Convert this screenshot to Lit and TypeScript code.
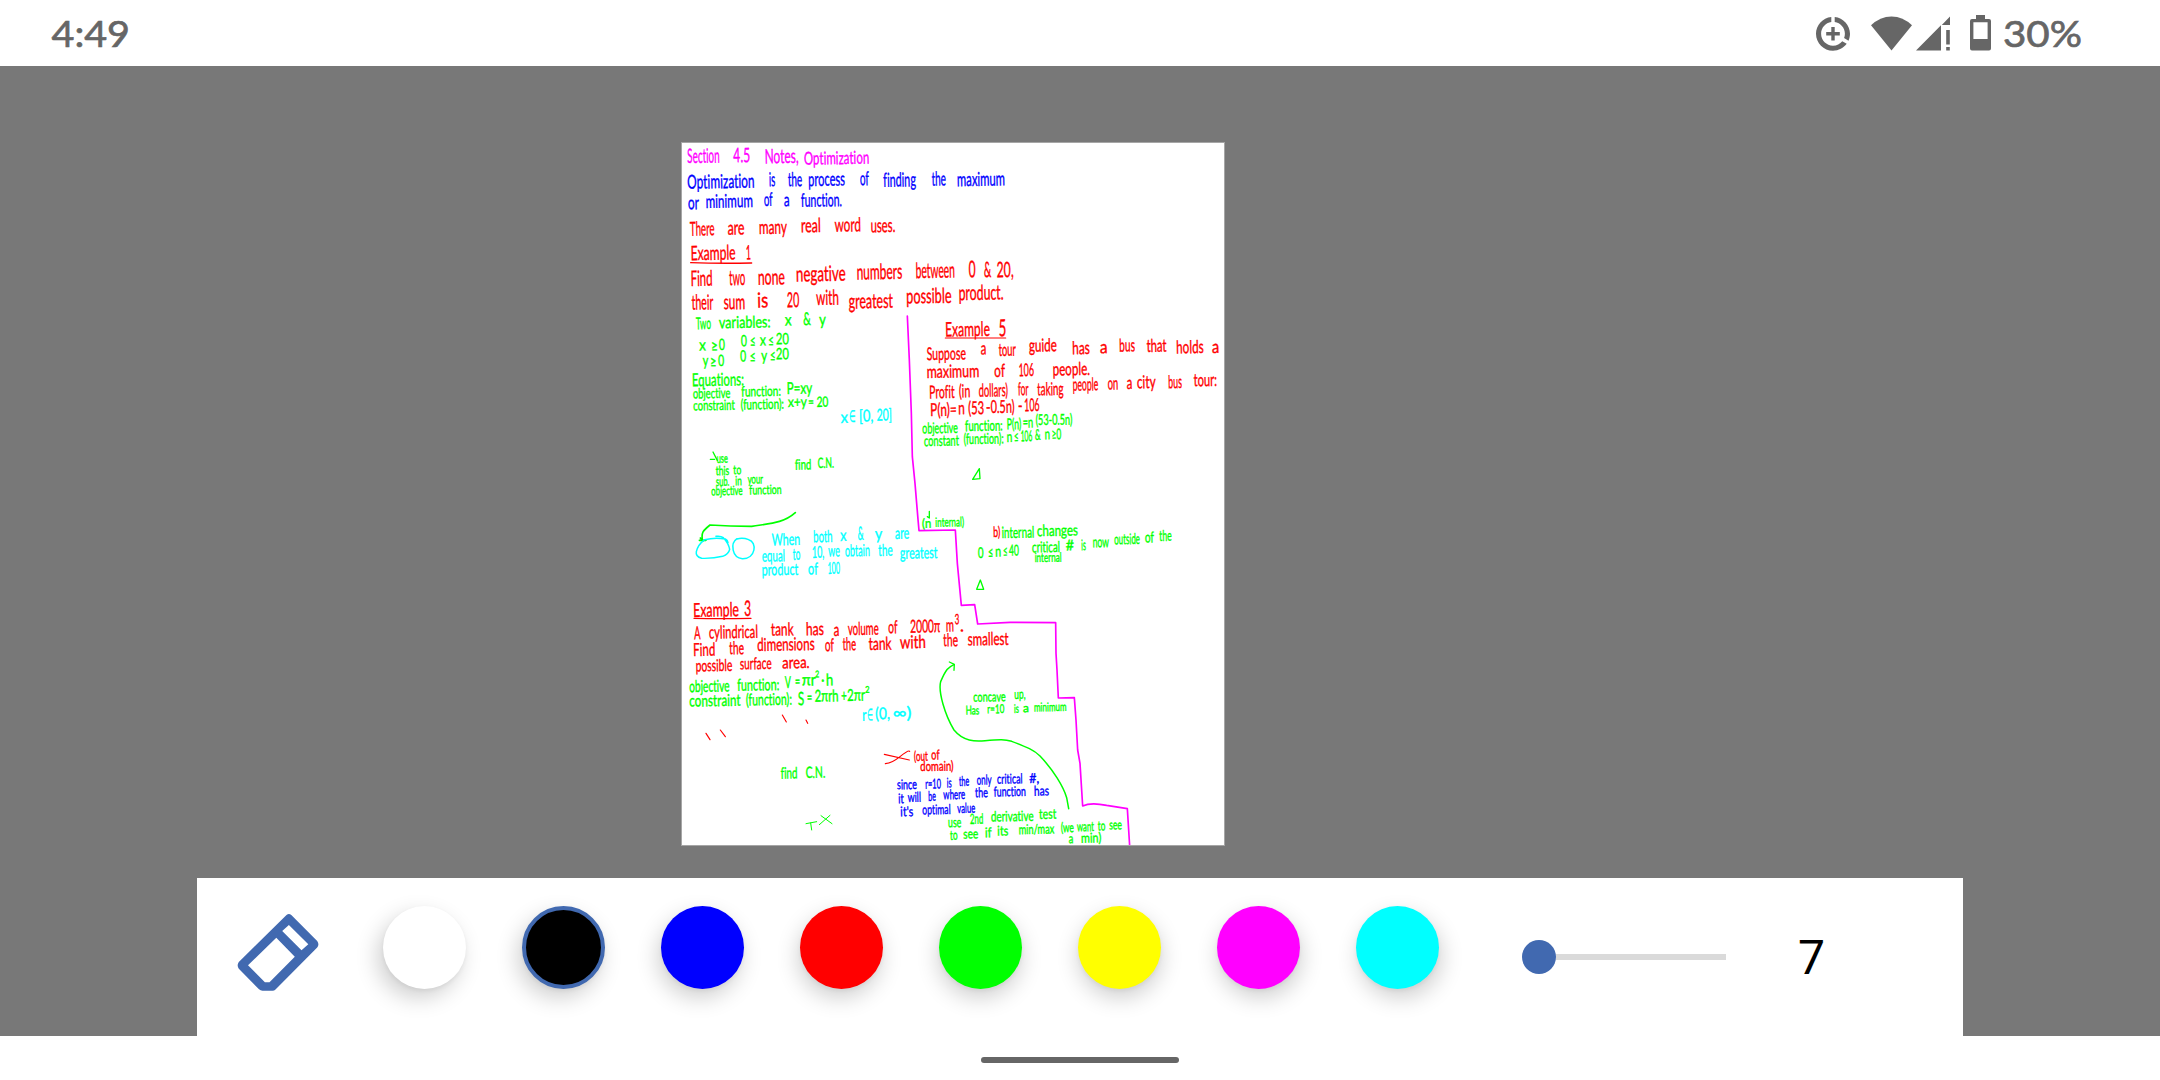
import { LitElement, html, svg, css } from "lit";
import { customElement, property } from "lit/decorators.js";

const MAGENTA = "#ff00ff";
const BLUE = "#0000ff";
const RED = "#ff0000";
const GREEN = "#00ff00";
const CYAN = "#00ffff";

// A word: text, left edge, right edge, baseline, optional size override.
type Word = [string, number, number, number, number?];
interface Line { ink: string; size: number; words: Word[]; }
interface Block { dx: number; dy: number; lines: Line[]; }

// Canvas units are a third of a screen pixel.
const BLOCKS: Block[] = [
  { dx: 0, dy: 0, lines: [
    { ink: MAGENTA, size: 56, words: [["Section", 52, 149, 97], ["4.5", 190, 241, 95], ["Notes,", 284, 386, 98], ["Optimization", 402, 598, 101, 50]] },
    { ink: BLUE, size: 54, words: [["Optimization", 52, 254, 173], ["is", 297, 316, 167], ["the", 354, 397, 167], ["process", 415, 525, 166], ["of", 570, 597, 164], ["finding", 640, 738, 168], ["the", 785, 828, 165], ["maximum", 861, 1005, 166]] },
    { ink: BLUE, size: 52, words: [["or", 54, 87, 236], ["minimum", 107, 249, 231], ["of", 282, 308, 226], ["a", 342, 359, 227], ["function.", 393, 516, 228]] },
    { ink: RED, size: 54, words: [["There", 60, 134, 315], ["are", 173, 224, 312], ["many", 267, 351, 310], ["real", 393, 453, 305], ["word", 494, 573, 303], ["uses.", 602, 676, 305]] },
    { ink: RED, size: 56, words: [["Example", 62, 197, 388], ["1", 228, 243, 387]] },
    { ink: RED, size: 60, words: [["Find", 62, 128, 466], ["two", 178, 226, 464], ["none", 264, 345, 462], ["negative", 378, 527, 452], ["numbers", 560, 697, 446], ["between", 737, 855, 442], ["0", 896, 917, 441, 66], ["&", 942, 964, 440], ["20,", 980, 1031, 440]] },
    { ink: RED, size: 58, words: [["their", 65, 130, 537], ["sum", 161, 226, 536], ["is", 262, 295, 531], ["20", 351, 388, 530], ["with", 439, 507, 523], ["greatest", 536, 669, 533], ["possible", 709, 845, 518], ["product.", 866, 1001, 508]] },
  ] },
  { dx: 0, dy: 510, lines: [
    { ink: GREEN, size: 46, words: [["Two", 78, 123, 86], ["variables:", 147, 302, 82], ["x", 345, 365, 75], ["&", 400, 423, 74, 50], ["y", 448, 468, 74]] },
    { ink: GREEN, size: 44, words: [["x", 88, 108, 150], ["≥", 124, 144, 152], ["0", 147, 165, 148], ["0", 213, 231, 137], ["≤", 240, 257, 138], ["x", 270, 288, 135], ["≤", 295, 312, 136], ["20", 318, 357, 131]] },
    { ink: GREEN, size: 44, words: [["y", 98, 115, 196], ["≥", 121, 140, 199], ["0", 145, 163, 196], ["0", 211, 229, 183], ["≤", 239, 257, 184], ["y", 274, 292, 181], ["≤", 300, 317, 181], ["20", 318, 357, 176]] },
    { ink: GREEN, size: 50, words: [["Equations:", 66, 222, 256]] },
    { ink: GREEN, size: 40, words: [["objective", 69, 181, 293], ["function:", 214, 333, 287], ["P=xy", 350, 427, 280, 46], ["constraint", 70, 195, 329], ["(function):", 212, 342, 326], ["x+y", 354, 411, 319], ["=", 415, 432, 319], ["20", 440, 475, 319]] },
    { ink: CYAN, size: 46, words: [["x", 512, 534, 367], ["∈", 538, 557, 364], ["[0,", 567, 610, 363], ["20]", 620, 666, 360]] },
    { ink: GREEN, size: 36, words: [["use", 140, 174, 487], ["this", 137, 178, 524], ["to", 190, 214, 521], ["sub.", 138, 178, 556], ["in", 196, 216, 554], ["your", 233, 279, 549], ["objective", 124, 218, 584], ["function", 238, 335, 581], ["find", 375, 424, 507, 40], ["C.N.", 443, 492, 502, 40]] },
  ] },
  { dx: 660, dy: 510, lines: [
    { ink: RED, size: 56, words: [["Example", 166, 300, 107], ["5", 326, 349, 107, 66]] },
    { ink: RED, size: 50, words: [["Suppose", 110, 228, 178], ["a", 272, 289, 162], ["tour", 326, 378, 166], ["guide", 417, 501, 153], ["has", 547, 600, 161], ["a", 630, 653, 158], ["bus", 688, 735, 153], ["that", 770, 830, 154], ["holds", 859, 941, 158], ["a", 966, 988, 157]] },
    { ink: RED, size: 50, words: [["maximum", 110, 268, 231], ["of", 313, 345, 229], ["106", 386, 432, 227], ["people.", 488, 600, 224]] },
    { ink: RED, size: 50, words: [["Profit", 118, 194, 293], ["(in", 207, 241, 290], ["dollars)", 266, 354, 288], ["for", 384, 416, 284], ["taking", 442, 521, 284], ["people", 548, 625, 270], ["on", 653, 685, 267], ["a", 710, 727, 265], ["city", 741, 797, 263], ["bus", 835, 876, 263], ["tour:", 911, 981, 257]] },
    { ink: RED, size: 50, words: [["P(n)=", 121, 200, 346], ["n", 205, 225, 341], ["(53", 235, 283, 341], ["-", 288, 302, 338], ["0.5n)", 302, 374, 337], ["-", 384, 398, 334], ["106", 403, 449, 332]] },
    { ink: GREEN, size: 42, words: [["objective", 97, 204, 398], ["function:", 225, 338, 391], ["P(n)", 350, 394, 386], ["=n", 398, 430, 381], ["(53-0.5n)", 437, 547, 373], ["constant", 102, 207, 436], ["(function):", 221, 341, 430], ["n", 350, 367, 424], ["≤", 372, 386, 424], ["106", 392, 427, 422], ["&", 435, 452, 418], ["n", 464, 480, 416], ["≥0", 485, 514, 416]] },
  ] },
  { dx: 0, dy: 1110, lines: [
    { ink: CYAN, size: 46, words: [["When", 305, 391, 134], ["both", 430, 488, 125], ["x", 511, 530, 121], ["&", 563, 581, 118, 52], ["y", 615, 637, 117], ["are", 675, 718, 115]] },
    { ink: CYAN, size: 46, words: [["equal", 276, 345, 183], ["to", 368, 391, 178], ["10,", 426, 463, 172], ["we", 475, 510, 168], ["obtain", 525, 600, 167], ["the", 625, 668, 166], ["greatest", 690, 803, 174]] },
    { ink: CYAN, size: 46, words: [["product", 275, 385, 224], ["of", 414, 444, 222], ["100", 473, 510, 220]] },
    { ink: RED, size: 54, words: [["Example", 70, 207, 348], ["3", 223, 244, 346, 60]] },
    { ink: RED, size: 50, words: [["A", 73, 92, 416], ["cylindrical", 117, 264, 413], ["tank", 303, 371, 405], ["has", 408, 462, 404], ["a", 491, 508, 406], ["volume", 534, 626, 403], ["of", 655, 683, 398], ["2000π", 721, 811, 396], ["m", 828, 852, 393], ["3", 854, 868, 371, 40], [".", 870, 882, 393]] },
    { ink: RED, size: 50, words: [["Find", 70, 136, 466], ["the", 178, 222, 461], ["dimensions", 262, 434, 450], ["of", 465, 492, 452], ["the", 518, 558, 449], ["tank", 596, 665, 448], ["with", 690, 768, 443], ["the", 820, 864, 437], ["smallest", 893, 1016, 434]] },
  ] },
  { dx: 690, dy: 1110, lines: [
    { ink: GREEN, size: 36, words: [["(n", 66, 94, 82], ["internal)", 106, 192, 78]] },
    { ink: RED, size: 40, words: [["b)", 280, 301, 109]] },
    { ink: GREEN, size: 44, words: [["internal", 305, 403, 112], ["changes", 411, 534, 106]] },
    { ink: GREEN, size: 42, words: [["0", 234, 251, 172], ["≤", 264, 280, 171], ["n", 286, 304, 168], ["≤", 309, 323, 167], ["40", 327, 357, 165], ["critical", 396, 480, 155], ["#", 497, 522, 150], ["is", 544, 558, 149], ["now", 578, 627, 140], ["outside", 643, 720, 131], ["of", 735, 762, 126], ["the", 778, 815, 121], ["internal", 404, 485, 184, 36]] },
  ] },
  { dx: 0, dy: 1560, lines: [
    { ink: RED, size: 46, words: [["possible", 77, 187, 62], ["surface", 210, 305, 56], ["area.", 337, 419, 53]] },
    { ink: GREEN, size: 46, words: [["objective", 58, 179, 124], ["function:", 202, 328, 120], ["V", 345, 363, 112], ["=", 375, 391, 110], ["πr", 396, 438, 105], ["2", 436, 448, 80, 26], ["·", 454, 464, 105], ["h", 468, 490, 105]] },
    { ink: GREEN, size: 46, words: [["constraint", 58, 212, 167], ["(function):", 228, 366, 164], ["S", 384, 403, 164, 52], ["=", 411, 427, 158], ["2πrh", 434, 506, 153], ["+", 514, 531, 152], ["2πr", 532, 585, 151], ["2", 586, 599, 127, 26]] },
    { ink: CYAN, size: 46, words: [["r", 577, 590, 211], ["∈", 592, 609, 210], ["(0,", 616, 660, 206], ["∞)", 668, 725, 204]] },
    { ink: RED, size: 38, words: [["(out", 732, 774, 331], ["of", 784, 809, 327], ["domain)", 751, 851, 361]] },
    { ink: GREEN, size: 44, words: [["find", 332, 383, 384], ["C.N.", 407, 466, 382]] },
    { ink: BLUE, size: 38, words: [["since", 681, 741, 416], ["r=10", 766, 813, 414], ["is", 830, 845, 411], ["the", 867, 898, 406], ["only", 920, 965, 402], ["critical", 981, 1058, 399], ["#,", 1078, 1108, 397]] },
    { ink: BLUE, size: 38, words: [["it", 685, 702, 458], ["will", 713, 753, 454], ["be", 775, 798, 451], ["where", 820, 886, 446], ["the", 915, 954, 440], ["function", 971, 1068, 437], ["has", 1092, 1137, 435]] },
    { ink: BLUE, size: 38, words: [["it's", 691, 730, 497], ["optimal", 757, 842, 491], ["value", 862, 916, 487]] },
  ] },
  { dx: 750, dy: 1560, lines: [
    { ink: GREEN, size: 38, words: [["concave", 160, 257, 153], ["up,", 283, 317, 145], ["Has", 137, 178, 192, 34], ["r=10", 202, 253, 188, 34], ["is", 282, 297, 187, 34], ["a", 309, 327, 185, 34], ["minimum", 342, 440, 182, 34]] },
    { ink: GREEN, size: 40, words: [["use", 84, 124, 530], ["2nd", 150, 190, 520], ["derivative", 213, 341, 512], ["test", 357, 409, 505]] },
    { ink: GREEN, size: 38, words: [["to", 90, 113, 568], ["see", 130, 175, 564], ["if", 195, 215, 560], ["its", 232, 265, 555], ["min/max", 296, 403, 550], ["(we", 423, 462, 545], ["want", 471, 522, 542], ["to", 533, 556, 540], ["see", 568, 606, 537], ["a", 446, 460, 578], ["min)", 483, 544, 576]] },
  ] },
];

// Freehand strokes: ink, path data, stroke width.
const STROKES: [string, string, number][] = [
  [RED, "M62 398 Q150 401 245 399", 4],
  [RED, "M826 624 H1007", 3.5],
  [RED, "M72 1465 Q150 1467 243 1465", 4],
  [MAGENTA, "M712 558 L718 690 L724 850 L727 980 L735 1060 L744 1168 L747 1202 L856 1200 L862 1300 L874 1426 L914 1424 L923 1482 L1020 1477 L1157 1478 L1158 1570 L1161 1620 L1165 1704 L1213 1703 L1218 1770 L1223 1860 L1230 1900 L1238 2028 Q1262 2016 1310 2026 L1372 2036 L1379 2148", 5],
  [GREEN, "M121 988 L134 988 M129 966 L142 991", 4],
  [GREEN, "M376 1148 C340 1180 300 1180 245 1189 Q180 1189 120 1185 C98 1203 94 1207 97 1230 M88 1231 L108 1231 M91 1224 L99 1233", 5],
  [CYAN, "M138 1219 Q152 1217 160 1223 Q176 1240 179 1258 Q176 1272 158 1279 Q130 1286 95 1285 Q76 1280 79 1265 Q84 1244 104 1229 Q135 1221 166 1227 Q173 1231 174 1238", 4.5],
  [CYAN, "M201 1226 C180 1240 186 1283 217 1286 C258 1287 262 1236 236 1229 Q218 1222 201 1227", 4.5],
  [GREEN, "M908 1048 L928 1016 L930 1046 Z", 4],
  [GREEN, "M778 1144 L778 1164 L772 1160", 4],
  [GREEN, "M920 1378 L931 1350 L941 1378 Z", 4],
  [RED, "M108 1810 L120 1829 M151 1800 L166 1820 M337 1755 L349 1776 M408 1770 L413 1780", 3.5],
  [RED, "M643 1873 L718 1890 M646 1901 Q665 1900 690 1880 T719 1864", 3.5],
  [GREEN, "M408 2081 L440 2075 M422 2079 L425 2100 M448 2084 L480 2056 M453 2057 L486 2081", 3],
  [GREEN, "M852 1604 C834 1612 828 1618 812 1655 C804 1685 825 1755 852 1800 C880 1834 915 1835 945 1832 C990 1828 1005 1828 1025 1834 C1072 1852 1092 1860 1110 1878 C1150 1920 1180 1970 1190 2003 L1196 2036", 4.5],
  [GREEN, "M838 1596 L853 1603 L852 1621", 4],
];

@customElement("note-page")
export class NotePage extends LitElement {
  static styles = css`
    :host { display: block; width: 542px; height: 702px; background: #fff; outline: 1px solid #a6a6a6; }
    svg { display: block; width: 542px; height: 702px; }
    text { font-family: Lato, "DejaVu Sans", sans-serif; text-rendering: geometricPrecision; font-variant-ligatures: none; }
  `;

  private word(w: Word, line: Line) {
    const [text, left, right, base, size] = w;
    return svg`<text x=${left} y=${base + 1.5} transform="rotate(-1 ${(left + right) / 2} ${base})" font-size=${(size ?? line.size) * 1.07} textLength=${right - left} lengthAdjust="spacingAndGlyphs">${text}</text>`;
  }

  render() {
    return html`<svg viewBox="36 39 1626 2106">
      ${BLOCKS.map((b) => svg`<g transform="translate(${b.dx} ${b.dy})">
        ${b.lines.map((l) => svg`<g fill=${l.ink} stroke=${l.ink} stroke-width="1.2">${l.words.map((w) => this.word(w, l))}</g>`)}
      </g>`)}
      ${STROKES.map(([ink, d, width]) => svg`<path d=${d} fill="none" stroke=${ink} stroke-width=${width} stroke-linejoin="round" stroke-linecap="round"></path>`)}
    </svg>`;
  }
}

@customElement("status-bar")
export class StatusBar extends LitElement {
  static styles = css`
    :host { display: flex; height: 66px; box-sizing: border-box; padding: 0 76px 0 50px; justify-content: space-between; background: #fff; color: #666; }
    svg { display: block; fill: #666; }
    .label { font-size: 37.5px; }
    .label text { font-family: Lato, sans-serif; font-weight: 400; stroke: #666; stroke-width: 0.7px; }
    .right { display: flex; }
    .icons { overflow: visible; }
  `;

  render() {
    return html`
      <svg class="label" width="90" height="66"><text x="1.5" y="47" textLength="78.5" lengthAdjust="spacingAndGlyphs">4:49</text></svg>
      <div class="right">
        <svg class="icons" width="174" height="66" viewBox="1820 0 174 66">
          <path transform="translate(1812.6 13.4) scale(1.7)" d="M11 8v3H8v2h3v3h2v-3h3v-2h-3V8h-2zm2-5.95v3.03c3.39.49 6 3.39 6 6.92 0 .9-.18 1.75-.48 2.54l2.6 1.53c.56-1.24.88-2.62.88-4.07 0-5.18-3.95-9.45-9-9.95zM12 19c-3.87 0-7-3.13-7-7 0-3.53 2.61-6.43 6-6.92V2.05c-5.06.5-9 4.76-9 9.95 0 5.52 4.47 10 9.99 10 3.31 0 6.24-1.61 8.06-4.09l-2.6-1.53C16.17 17.98 14.21 19 12 19z"></path>
          <path d="M1871 25.3 Q1880 16.4 1891.5 16.4 Q1903 16.4 1912 25.3 L1891.5 50.5 Z"></path>
          <path d="M1916 50.6 L1941 25.3 V50.6 Z M1941.8 25 L1950 16.5 V25 Z M1946.2 30 H1949.8 V44.5 H1946.2 Z M1946.2 47 H1949.8 V50.6 H1946.2 Z"></path>
          <path fill-rule="evenodd" d="M1976 15 H1985 V19 H1989 Q1991 19 1991 21 V48.6 Q1991 50.6 1989 50.6 H1972 Q1970 50.6 1970 48.6 V21 Q1970 19 1972 19 H1976 Z M1973.4 22.2 V39 H1987.6 V22.2 Z"></path>
        </svg>
        <svg class="label" width="90" height="66"><text x="9" y="47" textLength="79" lengthAdjust="spacingAndGlyphs">30%</text></svg>
      </div>`;
  }
}

const SWATCHES = ["#ffffff", "#000000", BLUE, RED, GREEN, "#ffff00", MAGENTA, CYAN];

@customElement("tool-bar")
export class ToolBar extends LitElement {
  @property({ type: Number }) selected = 1;
  @property({ type: Number }) thickness = 7;

  static styles = css`
    :host { display: flex; width: 1766px; height: 158px; box-sizing: border-box; background: #fff; }
    .eraser { display: block; width: 84px; height: 80px; margin: 34px 0 0 39px; flex: none; }
    .swatches { display: flex; gap: 56px; margin: 28px 0 0 63px; }
    .swatch { width: 83px; height: 83px; border-radius: 50%; box-sizing: border-box; flex: none; }
    .swatch.active { border: 4px solid #4169b0; }
    .slider { display: flex; align-items: center; width: 204px; height: 34px; margin: 62px 0 0 83px; flex: none; }
    .thumb { width: 34px; height: 34px; border-radius: 50%; background: #4169b0; flex: none; }
    .track { height: 6px; flex: 1; background: #dadada; }
    .value { width: 60px; margin: 52px 0 0 55.5px; font: 400 48px/56px Roboto, "Noto Sans", sans-serif; text-align: center; color: #000; }
  `;

  render() {
    return html`
      <svg class="eraser" viewBox="236 912 84 80">
        <path fill="#4169b0" fill-rule="evenodd" d="M286.5 915 Q288.9 913 291.3 915 L317.2 941 Q319.6 944.3 317.2 947.6 L275.5 989.5 Q274.3 990.7 272.5 990.7 H262.5 Q260.5 990.7 259 989.3 L238.8 968.7 Q236.5 965.3 238.8 962 Z M288.9 925 L282.2 931 L301.5 950.3 L308.3 944.3 Z M276.3 937.7 L248 965.3 L264.9 982.3 H269.5 L294.8 956.7 Z"></path>
      </svg>
      <div class="swatches">
        ${SWATCHES.map((c, i) => html`<div class="swatch ${i === this.selected ? "active" : ""}"
          style="background-color:${c};box-shadow:${(i - 4.7) * 1.2}px 9px 22px rgba(0,0,0,.19), 0 2px 4px rgba(0,0,0,.05)"></div>`)}
      </div>
      <div class="slider"><div class="thumb"></div><div class="track"></div></div>
      <div class="value">${this.thickness}</div>`;
  }
}

@customElement("app-root")
export class AppRoot extends LitElement {
  static styles = css`
    :host { display: flex; flex-direction: column; width: 2160px; height: 1080px; overflow: hidden; background: #fff; }
    .workspace { display: flex; flex-direction: column; justify-content: space-between; height: 970px; box-sizing: border-box; padding: 77px 197px 0; background: #787878; }
    note-page { margin-left: 485px; }
    .nav { display: flex; flex: 1; align-items: center; justify-content: center; }
    .home { width: 198px; height: 6px; margin-top: 4px; border-radius: 3px; background: #666; }
  `;

  render() {
    return html`
      <status-bar></status-bar>
      <div class="workspace">
        <note-page></note-page>
        <tool-bar></tool-bar>
      </div>
      <div class="nav"><div class="home"></div></div>`;
  }
}
